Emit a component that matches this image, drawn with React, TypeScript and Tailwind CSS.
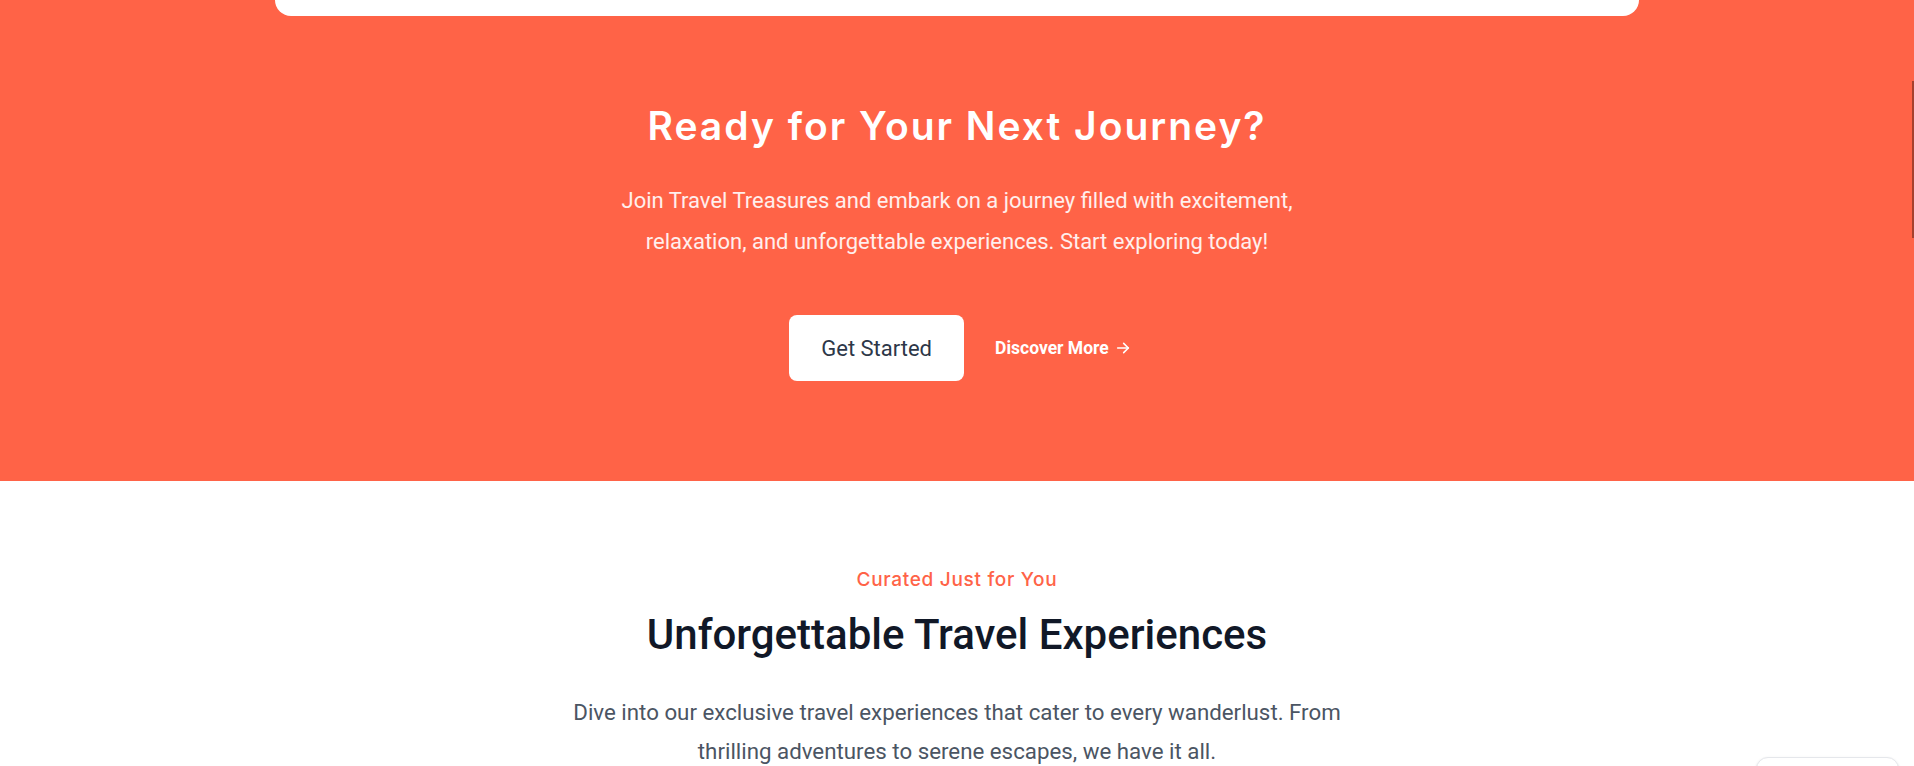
import React from "react";

export default function App() {
  return (
    <div className="relative w-full min-h-[766px] bg-white overflow-hidden" style={{ fontFamily: "Roboto, 'Liberation Sans', sans-serif" }}>
      {/* Orange CTA section */}
      <section className="bg-[#ff6347] flex flex-col items-center pb-[100px]">
        <div className="w-[1364px] h-4 bg-white rounded-b-3xl" />
        <h2 className="mt-[90px] text-[39px] leading-[40px] font-semibold text-white tracking-[2px] font-['Inter',sans-serif]">
          Ready for Your Next Journey?
        </h2>
        <p className="mt-[34px] max-w-[740px] text-center text-[22px] leading-[41px] text-white/90">
          Join Travel Treasures and embark on a journey filled with excitement, relaxation, and unforgettable experiences. Start exploring today!
        </p>
        <div className="mt-[53px] flex items-center gap-[31px] ml-[6px]">
          <button className="h-[66px] px-8 bg-white rounded-lg text-[22px] text-[#2d3748]">Get Started</button>
          <a className="flex items-center gap-1.5 text-[17.5px] font-bold text-white">
            Discover More
            <svg width="16" height="16" viewBox="0 0 24 24" fill="none" stroke="currentColor" strokeWidth="2.4" strokeLinecap="round" strokeLinejoin="round">
              <path d="M4 12h16" />
              <path d="M13 5l7 7-7 7" />
            </svg>
          </a>
        </div>
      </section>

      {/* Experiences intro */}
      <section className="flex flex-col items-center pt-[85px]">
        <p className="text-[19px] leading-[28px] font-medium text-[#ff6347] tracking-[0.7px] font-['Inter',sans-serif]">Curated Just for You</p>
        <h2 className="mt-[21px] text-[42px] leading-[40px] font-medium text-[#111827]">Unforgettable Travel Experiences</h2>
        <p className="mt-[38px] max-w-[820px] text-center text-[22.3px] leading-[39px] text-[#4b5563]">
          Dive into our exclusive travel experiences that cater to every wanderlust. From thrilling adventures to serene escapes, we have it all.
        </p>
      </section>

      {/* Scrollbar thumb overlay */}
      <div className="absolute right-0 top-[81px] w-[2px] h-[157px] bg-black/35" />
      {/* Bottom-right widget */}
      <div className="absolute left-[1756px] top-[757px] w-[143px] h-10 bg-white border border-gray-200 rounded-xl shadow-sm">
        <div className="ml-5 mt-2 w-3 h-1 bg-gray-800" />
      </div>
    </div>
  );
}
